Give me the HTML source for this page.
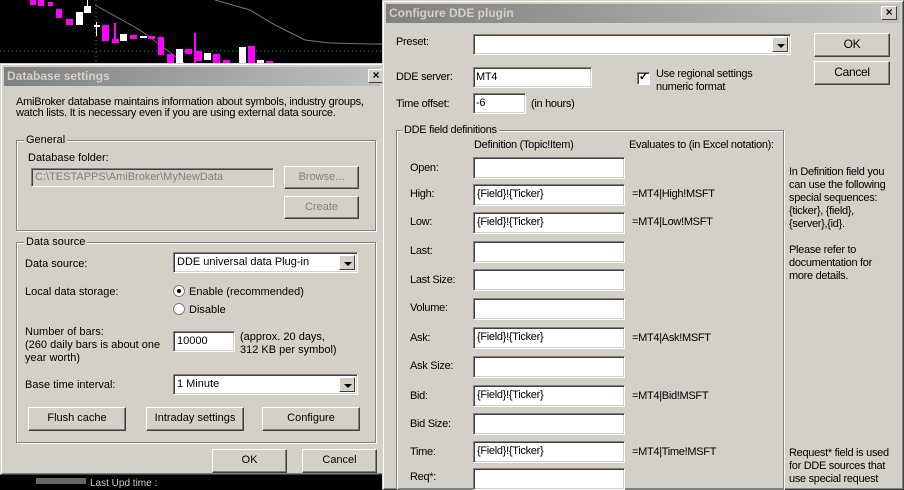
<!DOCTYPE html>
<html><head><meta charset="utf-8"><style>
*{margin:0;padding:0;box-sizing:border-box}
body{width:904px;height:484px;overflow:hidden;background:#000;position:relative;font-family:"Liberation Sans",sans-serif;font-size:11px;color:#000}
.a{position:absolute;white-space:nowrap;line-height:13px}
.dlg{position:absolute;background:#d4d0c8;border:1px solid;border-color:#d4d0c8 #404040 #404040 #d4d0c8;box-shadow:inset 1px 1px #fff,inset -1px -1px #808080}
.title{position:absolute;height:19px;background:linear-gradient(90deg,#808080,#c0c0c0);color:#d4d0c8;font-weight:bold;font-size:12px;line-height:19px;padding-left:3px}
.x{position:absolute;width:16px;height:14px;background:#d4d0c8;border:1px solid;border-color:#fff #404040 #404040 #fff;font-size:12px;line-height:11px;text-align:center;font-weight:bold}
.in{position:absolute;background:#fff;border:1px solid;border-color:#808080 #fff #fff #808080;box-shadow:inset 1px 1px #404040,inset -1px -1px #d4d0c8;padding-left:3px;line-height:19px;white-space:nowrap}
.btn{position:absolute;background:#d4d0c8;border:1px solid;border-color:#fff #404040 #404040 #fff;box-shadow:inset -1px -1px #808080;text-align:center;white-space:nowrap}
.grp{position:absolute;border:1px solid #808080;box-shadow:1px 1px #fff,inset 1px 1px #fff}
.gl{position:absolute;background:#d4d0c8;padding:0 2px;line-height:13px;white-space:nowrap}
.arr{position:absolute;right:2px;top:2px;width:16px;bottom:2px;background:#d4d0c8;border:1px solid;border-color:#fff #404040 #404040 #fff}
.arr:after{content:"";position:absolute;left:4px;top:6px;border-left:4px solid transparent;border-right:4px solid transparent;border-top:4px solid #000}
.dde{font-size:11px;letter-spacing:-0.3px}
</style></head><body>
<svg style="position:absolute;left:0;top:0" width="384" height="64">
<polyline points="95,5 140,30 200,75 260,100" stroke="#777" fill="none"/>
<polyline points="215,0 250,10 275,25 305,40 330,43 370,44 384,44" stroke="#777" fill="none"/>
<line x1="0" y1="51" x2="384" y2="51" stroke="#0a3" stroke-dasharray="1 3"/>
<line x1="96" y1="0" x2="96" y2="64" stroke="#0a3" stroke-dasharray="1 3"/>
<g fill="#f0f">
<rect x="30" y="0" width="6" height="5"/><rect x="38" y="0" width="6" height="6"/><rect x="48" y="2" width="5" height="4"/><rect x="56" y="9" width="6" height="9"/><rect x="66" y="19" width="7" height="6"/>
<rect x="102" y="25" width="7" height="16"/><rect x="112" y="39" width="7" height="4"/><rect x="130" y="35" width="7" height="4"/><rect x="148" y="36" width="7" height="3"/><rect x="158" y="37" width="6" height="18"/>
<rect x="167" y="54" width="7" height="10"/><rect x="185" y="49" width="7" height="5"/><rect x="196" y="51" width="6" height="10"/><rect x="213" y="54" width="7" height="10"/><rect x="223" y="60" width="7" height="4"/><rect x="248" y="46" width="7" height="18"/><rect x="266" y="61" width="7" height="3"/>
<rect x="194" y="33" width="2" height="31"/><rect x="114" y="23" width="2" height="20"/></g>
<g fill="#fff"><rect x="76" y="12" width="7" height="13"/><rect x="84" y="6" width="7" height="7"/><rect x="94" y="25" width="6" height="2"/><rect x="120" y="34" width="7" height="7"/><rect x="140" y="36" width="7" height="2"/><rect x="176" y="49" width="7" height="15"/><rect x="204" y="53" width="7" height="7"/><rect x="239" y="47" width="7" height="17"/><rect x="257" y="60" width="7" height="4"/><rect x="87" y="0" width="1" height="13"/><rect x="96" y="22" width="1" height="14"/></g>
</svg>
<div class="a" style="left:90px;top:477px;color:#ccc;font-size:10px">Last Upd time :</div>
<div style="position:absolute;left:36px;top:478px;width:50px;height:6px;background:#666"></div>

<div class="dlg" style="left:0;top:63px;width:385px;height:412px">
<div class="title" style="left:3px;top:3px;right:3px">Database settings</div>
<div class="x" style="left:367px;top:5px">×</div>
</div>
<div class="a" style="left:16px;top:96px;letter-spacing:-0.25px">AmiBroker database maintains information about symbols, industry groups,</div>
<div class="a" style="left:16px;top:107px;letter-spacing:-0.25px">watch lists. It is necessary even if you are using external data source.</div>
<div class="grp" style="left:16px;top:140px;width:360px;height:91px"></div>
<div class="gl" style="left:24px;top:134px">General</div>
<div class="a" style="left:28px;top:152px">Database folder:</div>
<div class="in" style="left:31px;top:168px;width:243px;height:19px;line-height:17px;background:#d4d0c8;color:#808080">C:\TESTAPPS\AmiBroker\MyNewData</div>
<div class="btn" style="left:284px;top:166px;width:75px;height:23px;line-height:20px;color:#808080">Browse...</div>
<div class="btn" style="left:284px;top:196px;width:75px;height:23px;line-height:20px;color:#808080">Create</div>
<div class="grp" style="left:16px;top:242px;width:360px;height:201px"></div>
<div class="gl" style="left:24px;top:236px">Data source</div>
<div class="a" style="left:25px;top:258px">Data source:</div>
<div class="in" style="left:173px;top:252px;width:185px;height:21px;line-height:19px">DDE universal data Plug-in<div class="arr"></div></div>
<div class="a" style="left:25px;top:286px">Local data storage:</div>
<svg style="position:absolute;left:173px;top:285px" width="13" height="40"><circle cx="6" cy="6" r="5.5" fill="#fff" stroke="#808080"/><circle cx="6" cy="6" r="2" fill="#000"/><circle cx="6" cy="24" r="5.5" fill="#fff" stroke="#808080"/></svg>
<div class="a" style="left:189px;top:286px">Enable (recommended)</div>
<div class="a" style="left:189px;top:304px">Disable</div>
<div class="a" style="left:25px;top:326px">Number of bars:</div>
<div class="a" style="left:25px;top:339px">(260 daily bars is about one</div>
<div class="a" style="left:25px;top:352px">year worth)</div>
<div class="in" style="left:173px;top:331px;width:62px;height:21px">10000</div>
<div class="a" style="left:240px;top:331px">(approx. 20 days,</div>
<div class="a" style="left:240px;top:344px">312 KB per symbol)</div>
<div class="a" style="left:25px;top:379px">Base time interval:</div>
<div class="in" style="left:173px;top:374px;width:185px;height:21px">1 Minute<div class="arr"></div></div>
<div class="btn" style="left:28px;top:407px;width:98px;height:24px;line-height:21px">Flush cache</div>
<div class="btn" style="left:146px;top:407px;width:98px;height:24px;line-height:21px">Intraday settings</div>
<div class="btn" style="left:262px;top:407px;width:98px;height:24px;line-height:21px">Configure</div>
<div class="btn" style="left:212px;top:449px;width:75px;height:24px;line-height:21px">OK</div>
<div class="btn" style="left:302px;top:449px;width:75px;height:24px;line-height:21px">Cancel</div>

<div class="dde">
<div class="dlg" style="left:382px;top:0;width:522px;height:490px">
<div class="title" style="left:3px;top:3px;right:3px;letter-spacing:0">Configure DDE plugin</div>
<div class="x" style="left:498px;top:5px">×</div>
</div>
<div class="a" style="left:396px;top:36px">Preset:</div>
<div class="in" style="left:473px;top:34px;width:318px;height:21px"><div class="arr"></div></div>
<div class="btn" style="left:814px;top:33px;width:76px;height:24px;line-height:21px;font-size:12px">OK</div>
<div class="btn" style="left:814px;top:61px;width:76px;height:24px;line-height:21px;font-size:12px">Cancel</div>
<div class="a" style="left:396px;top:71px">DDE server:</div>
<div class="in" style="left:473px;top:67px;width:119px;height:21px;padding-left:2px">MT4</div>
<div style="position:absolute;left:637px;top:72px;width:13px;height:13px;background:#fff;border:1px solid;border-color:#808080 #fff #fff #808080;box-shadow:inset 1px 1px #404040"></div>
<div class="a" style="left:639px;top:71px;font-weight:bold">✓</div>
<div class="a" style="left:656px;top:68px">Use regional settings</div>
<div class="a" style="left:656px;top:81px">numeric format</div>
<div class="a" style="left:396px;top:98px">Time offset:</div>
<div class="in" style="left:473px;top:93px;width:53px;height:21px;padding-left:2px">-6</div>
<div class="a" style="left:531px;top:98px">(in hours)</div>
<div class="grp" style="left:396px;top:130px;width:388px;height:360px"></div>
<div class="gl" style="left:402px;top:124px">DDE field definitions</div>
<div class="a" style="left:474px;top:139px">Definition (Topic!Item)</div>
<div class="a" style="left:629px;top:139px">Evaluates to (in Excel notation):</div>

<div class="a" style="left:410px;top:162px">Open:</div><div class="in" style="left:473px;top:157px;width:152px;height:22px"></div>
<div class="a" style="left:410px;top:188px">High:</div><div class="in" style="left:473px;top:184px;width:152px;height:22px">{Field}!{Ticker}</div><div class="a" style="left:632px;top:188px">=MT4|High!MSFT</div>
<div class="a" style="left:410px;top:216px">Low:</div><div class="in" style="left:473px;top:212px;width:152px;height:22px">{Field}!{Ticker}</div><div class="a" style="left:632px;top:216px">=MT4|Low!MSFT</div>
<div class="a" style="left:410px;top:245px">Last:</div><div class="in" style="left:473px;top:241px;width:152px;height:22px"></div>
<div class="a" style="left:410px;top:274px">Last Size:</div><div class="in" style="left:473px;top:269px;width:152px;height:22px"></div>
<div class="a" style="left:410px;top:302px">Volume:</div><div class="in" style="left:473px;top:298px;width:152px;height:22px"></div>
<div class="a" style="left:410px;top:332px">Ask:</div><div class="in" style="left:473px;top:327px;width:152px;height:22px">{Field}!{Ticker}</div><div class="a" style="left:632px;top:332px">=MT4|Ask!MSFT</div>
<div class="a" style="left:410px;top:360px">Ask Size:</div><div class="in" style="left:473px;top:356px;width:152px;height:22px"></div>
<div class="a" style="left:410px;top:390px">Bid:</div><div class="in" style="left:473px;top:385px;width:152px;height:22px">{Field}!{Ticker}</div><div class="a" style="left:632px;top:390px">=MT4|Bid!MSFT</div>
<div class="a" style="left:410px;top:418px">Bid Size:</div><div class="in" style="left:473px;top:413px;width:152px;height:22px"></div>
<div class="a" style="left:410px;top:446px">Time:</div><div class="in" style="left:473px;top:441px;width:152px;height:22px">{Field}!{Ticker}</div><div class="a" style="left:632px;top:446px">=MT4|Time!MSFT</div>
<div class="a" style="left:410px;top:471px">Req*:</div><div class="in" style="left:473px;top:468px;width:152px;height:22px"></div>

<div class="a" style="left:789px;top:166px">In Definition field you</div>
<div class="a" style="left:789px;top:179px">can use the following</div>
<div class="a" style="left:789px;top:192px">special sequences:</div>
<div class="a" style="left:789px;top:205px">{ticker}, {field},</div>
<div class="a" style="left:789px;top:218px">{server},{id}.</div>
<div class="a" style="left:789px;top:244px">Please refer to</div>
<div class="a" style="left:789px;top:257px">documentation for</div>
<div class="a" style="left:789px;top:270px">more details.</div>
<div class="a" style="left:789px;top:447px">Request* field is used</div>
<div class="a" style="left:789px;top:460px">for DDE sources that</div>
<div class="a" style="left:789px;top:473px">use special request</div>
</div>
</body></html>
